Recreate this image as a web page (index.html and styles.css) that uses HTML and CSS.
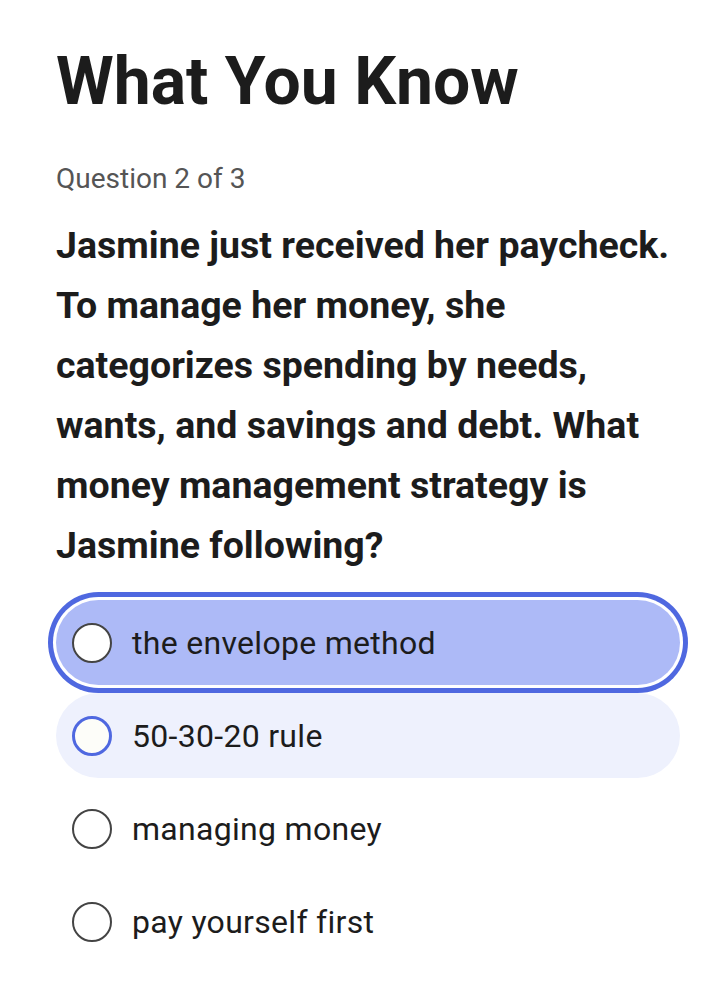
FILE: index.html
```
<!DOCTYPE html>
<html lang="en">

<head>
    <meta charset="UTF-8">
    <meta name="viewport" content="width=device-width, initial-scale=1.0">
    <title>What You Know</title>
    <link rel="stylesheet" href="styles.css">
</head>

<body>
    <div class="quiz">
        <h1 class="title">What You Know</h1>
        <p class="count">Question 2 of 3</p>
        <p class="question">Jasmine just received her paycheck. To manage her money, she categorizes spending by needs, wants, and savings and debt. What money management strategy is Jasmine following?</p>
        <ul class="options">
            <li class="option selected"><span class="radio"></span><span class="label">the envelope method</span></li>
            <li class="option hover"><span class="radio"></span><span class="label">50-30-20 rule</span></li>
            <li class="option"><span class="radio"></span><span class="label">managing money</span></li>
            <li class="option"><span class="radio"></span><span class="label">pay yourself first</span></li>
        </ul>
    </div>
</body>

</html>
```
FILE: styles.css
```
* {
    margin: 0;
    padding: 0;
    box-sizing: border-box;
}

body {
    background: #fff;
    font-family: Roboto, "Noto Sans", sans-serif;
    color: #1c1c1c;
}

.quiz {
    width: 680px;
    padding: 42px 0 0 56px;
}

.title {
    font-size: 66px;
    font-weight: 700;
    line-height: 80px;
}

.count {
    margin-top: 37px;
    font-size: 28px;
    line-height: 40px;
    color: #555;
}

.question {
    margin-top: 16px;
    font-size: 37.5px;
    font-weight: 700;
    line-height: 60px;
}

.options {
    list-style: none;
    margin-top: 25px;
}

.option {
    display: flex;
    align-items: center;
    height: 85px;
    padding-left: 16px;
    margin-bottom: 8px;
    border-radius: 43px;
    font-size: 32px;
    letter-spacing: 0.3px;
    color: #1c1c1c;
}

.radio {
    width: 40px;
    height: 40px;
    border-radius: 50%;
    border: 2px solid #444;
    background: #fff;
    margin-right: 20px;
    flex-shrink: 0;
}

.selected {
    background: #adbaf7;
    box-shadow: 0 0 0 3px #fff, 0 0 0 8px #4f68e0;
}

.hover {
    background: #eef1fd;
}

.hover .radio {
    border: 3px solid #4f68e0;
    background: #fdfdf9;
}
```
